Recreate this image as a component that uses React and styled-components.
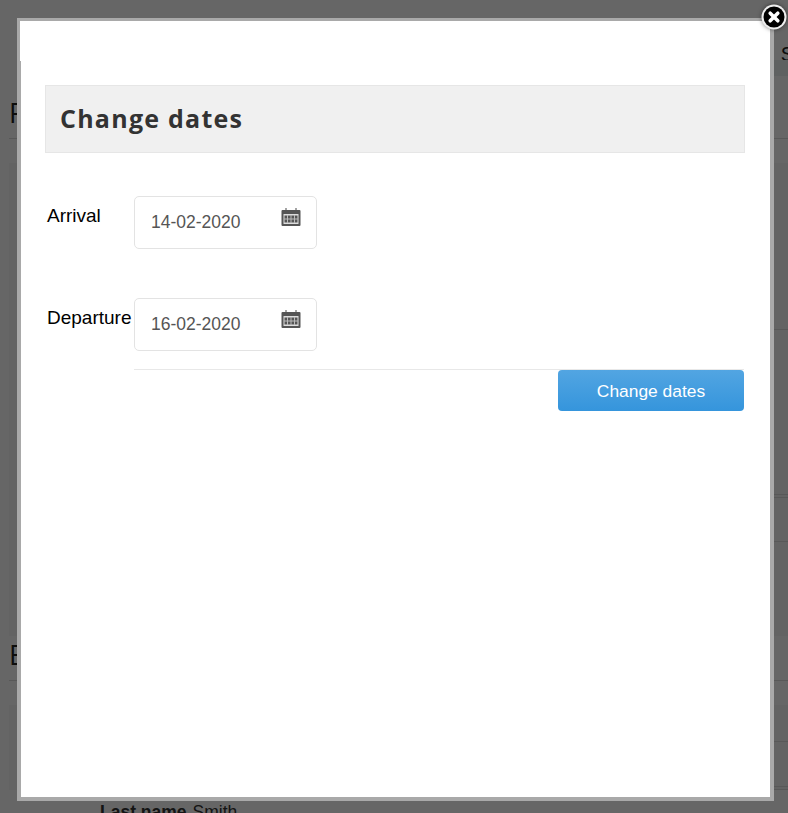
import React from 'react';
import styled, { createGlobalStyle } from 'styled-components';

const GlobalStyle = createGlobalStyle`
  html, body {
    margin: 0;
    padding: 0;
    height: 813px;
    overflow: hidden;
    background: #fff;
    font-family: "Liberation Sans", Arial, sans-serif;
  }
`;

const Page = styled.div`
  position: relative;
  width: 788px;
  height: 813px;
  overflow: hidden;
  background: #fff;
`;

const TopBar = styled.div`
  height: 76px;
  display: flex;
  flex-direction: column;
  align-items: flex-end;
  justify-content: flex-end;
  color: #222;
  font-size: 20px;
`;

const UserLink = styled.span`
  height: 16px;
  line-height: 20px;
  margin-right: -6px;
`;

const NavStrip = styled.div`
  width: 400px;
  height: 16px;
  background: #eef2f2;
`;

const Content = styled.div`
  padding: 23px 0 0 9px;
`;

const SectionTitle = styled.h2`
  margin: 0;
  height: 40px;
  box-sizing: border-box;
  font: 400 27px/28px "Open Sans", sans-serif;
  color: #222;
  border-bottom: 1px solid #ddd;
`;

const SectionBody = styled.div`
  height: ${p => p.$height}px;
  margin: 24px 0 ${p => p.$after}px;
  padding-left: 91px;
  background: #f8f8f8;
`;

const Row = styled.div`
  height: ${p => p.$height}px;
  box-sizing: border-box;
  border-bottom: 1px solid #ddd;
`;

const NameLine = styled.div`
  padding-top: 12px;
  font-size: 17.5px;
  line-height: 20px;
  color: #333;

  b {
    margin-right: 6px;
  }
`;

const Overlay = styled.div`
  position: absolute;
  inset: 0;
  background: rgba(0, 0, 0, 0.6);
`;

const Modal = styled.div`
  position: absolute;
  left: 17px;
  top: 18px;
  width: 757px;
  height: 783px;
  box-sizing: border-box;
  border: 4px solid #a9a9a9;
  border-top-width: 3px;
  border-left-width: 3px;
  background: #fff;
  padding: 64px 25px 0 25px;

  &::before {
    content: "";
    position: absolute;
    left: 0;
    top: 40px;
    bottom: 0;
    width: 1px;
    background: #a9a9a9;
  }
`;

const CloseButton = styled.button`
  position: absolute;
  left: 761px;
  top: 4px;
  width: 26px;
  height: 26px;
  padding: 0;
  border: 0;
  background: none;
  display: block;
  filter: drop-shadow(0 0 2px rgba(0, 0, 0, 0.5));
`;

const Header = styled.div`
  height: 68px;
  box-sizing: border-box;
  background: #f0f0f0;
  border: 1px solid #e6e6e6;
  padding-left: 14px;
  display: flex;
  align-items: center;
`;

const Title = styled.h1`
  margin: -2px 0 0;
  font: 700 25px/32px "Open Sans", sans-serif;
  letter-spacing: 1.25px;
  color: #333;
`;

const Form = styled.form`
  margin-top: 43px;
`;

const Field = styled.div`
  display: flex;

  & + & {
    margin-top: 49px;
  }
`;

const Label = styled.label`
  width: 89px;
  flex: none;
  padding: 9px 0 0 2px;
  box-sizing: border-box;
  font-size: 19px;
  line-height: 22px;
  color: #000;
  white-space: nowrap;
`;

const DateBox = styled.div`
  width: 183px;
  height: 53px;
  box-sizing: border-box;
  border: 1px solid #e3e3e3;
  border-radius: 5px;
  display: flex;
  justify-content: space-between;
  padding: 11px 15px 0 16px;
  font-size: 17.5px;
  line-height: 29px;
  color: #555;
`;

const Footer = styled.div`
  margin: 18px 1px 0 89px;
  border-top: 1px solid #e8e8e8;
  display: flex;
  justify-content: flex-end;
`;

const SubmitButton = styled.button`
  width: 186px;
  height: 41px;
  padding: 1px 0 0;
  border: 0;
  border-radius: 4px;
  background: linear-gradient(#52a5e2, #3595dc);
  color: #fff;
  font: 400 17.4px "Liberation Sans", Arial, sans-serif;
`;

const CalendarIcon = () => (
  <svg width="20" height="20" viewBox="0 0 20 20" style={{ flex: 'none', marginTop: -1 }}>
    <path d="M5 1v3M15 1v3" stroke="#888" strokeWidth="1.5" />
    <rect x="0.5" y="3" width="19" height="16" rx="1" fill="#555" />
    <rect x="2.5" y="7" width="15" height="10" fill="#ddd" />
    <path d="M3.5 8.5h13v7h-13z" fill="#555" />
    <path d="M6.5 8v8M10 8v8M13.5 8v8M3 12h14" stroke="#bbb" strokeWidth="1" />
  </svg>
);

const CloseIcon = () => (
  <svg width="26" height="26" viewBox="0 0 26 26">
    <circle cx="13" cy="13" r="12.5" fill="#eee" />
    <circle cx="13" cy="13" r="10.5" fill="#000" />
    <path d="M9.2 9.2l7.6 7.6M16.8 9.2l-7.6 7.6" stroke="#fff" strokeWidth="3.6" strokeLinecap="round" />
  </svg>
);

const dates = [
  { label: 'Arrival', value: '14-02-2020' },
  { label: 'Departure', value: '16-02-2020' },
];

const App = () => (
  <Page>
    <GlobalStyle />
    <TopBar>
      <UserLink>S</UserLink>
      <NavStrip />
    </TopBar>
    <Content>
      <SectionTitle>Payment</SectionTitle>
      <SectionBody $height={473} $after={5}>
        <Row $height={167} />
        <Row $height={165} />
        <Row $height={3} />
        <Row $height={44} />
      </SectionBody>
      <SectionTitle>Booking</SectionTitle>
      <SectionBody $height={85} $after={0}>
        <Row $height={37} />
        <Row $height={45} />
        <Row $height={3} />
        <NameLine><b>Last name</b>Smith</NameLine>
      </SectionBody>
    </Content>
    <Overlay />
    <Modal>
      <Header>
        <Title>Change dates</Title>
      </Header>
      <Form>
        {dates.map(d => (
          <Field key={d.label}>
            <Label>{d.label}</Label>
            <DateBox>
              {d.value}
              <CalendarIcon />
            </DateBox>
          </Field>
        ))}
        <Footer>
          <SubmitButton type="button">Change dates</SubmitButton>
        </Footer>
      </Form>
    </Modal>
    <CloseButton type="button" aria-label="Close"><CloseIcon /></CloseButton>
  </Page>
);

export default App;
